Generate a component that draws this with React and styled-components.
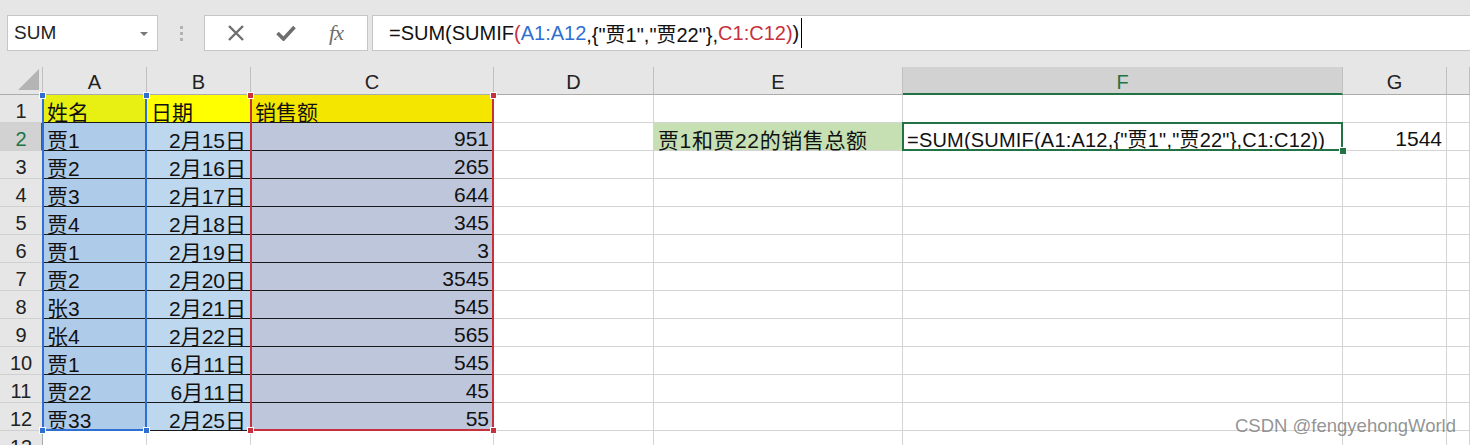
import React from "react";
import styled, { createGlobalStyle } from "styled-components";

const GlobalStyle = createGlobalStyle`
  html, body { margin: 0; padding: 0; background: #ffffff; overflow: hidden; }
  #root { width: 1470px; height: 445px; }
`;

const FONT = `"Liberation Sans", "Noto Sans CJK SC", Arial, sans-serif`;
const GREEN = "#217346";
const BLUE = "#2f6fd1";
const RED = "#c8303e";

const Page = styled.div`
  position: relative;
  width: 1470px;
  height: 445px;
  overflow: hidden;
  background: #ffffff;
  font-family: ${FONT};
`;

const Toolbar = styled.div`
  height: 67px;
  box-sizing: border-box;
  background: #e6e6e6;
  display: flex;
  align-items: flex-start;
  padding: 15px 0 0 7px;
`;

const NameBox = styled.div`
  width: 151px;
  height: 36px;
  box-sizing: border-box;
  background: #fff;
  border: 1px solid #c6c6c6;
  display: flex;
  align-items: center;
  justify-content: space-between;
  padding: 0 9px 0 6px;
  font-size: 19px;
  color: #222;
`;

const Caret = styled.span`
  width: 0;
  height: 0;
  border-left: 4px solid transparent;
  border-right: 4px solid transparent;
  border-top: 4px solid #777;
  margin-top: 2px;
`;

const Grip = styled.div`
  width: 46px;
  height: 36px;
  display: flex;
  flex-direction: column;
  align-items: center;
  justify-content: center;
  gap: 3px;
`;

const GripDot = styled.span`
  width: 3px;
  height: 3px;
  background: #b2b2b2;
`;

const ButtonBox = styled.div`
  width: 164px;
  height: 36px;
  box-sizing: border-box;
  background: #fff;
  border: 1px solid #c6c6c6;
  display: flex;
  align-items: center;
  justify-content: space-around;
  padding: 0 6px;
`;

const IconButton = styled.span`
  width: 40px;
  height: 34px;
  display: flex;
  align-items: center;
  justify-content: center;
  color: #6e6e6e;
`;

const Fx = styled.span`
  font-family: "Liberation Serif", "DejaVu Serif", serif;
  font-style: italic;
  font-size: 22px;
  color: #6e6e6e;
  letter-spacing: -1px;
`;

const FormulaInput = styled.div`
  flex: 1;
  height: 36px;
  margin-left: 4px;
  box-sizing: border-box;
  background: #fff;
  border: 1px solid #c6c6c6;
  border-right: none;
  display: flex;
  align-items: center;
  padding-left: 16px;
  font-size: 20px;
  color: #111;
  white-space: pre;
`;

const Tok = styled.span`
  color: ${(p) => p.$c || "#111"};
`;

const Cursor = styled.span`
  display: inline-block;
  width: 1px;
  height: 30px;
  background: #000;
  margin-left: 2px;
`;

const Sheet = styled.div`
  display: grid;
  grid-template-columns: 43px 104px 104px 243px 160px 249px 440px 104px 1fr;
  grid-auto-rows: 28px;
  font-size: 20px;
`;

const Corner = styled.div`
  grid-row: 1;
  grid-column: 1;
  background: #e6e6e6;
  border-right: 1px solid #c0c0c0;
  border-bottom: 1px solid #ababab;
  box-sizing: border-box;
  display: flex;
  align-items: flex-end;
  justify-content: flex-end;
  padding: 0 3px 4px 0;
`;

const ColHead = styled.div`
  grid-row: 1;
  grid-column: ${(p) => p.$col};
  box-sizing: border-box;
  background: ${(p) => (p.$active ? "#d2d2d2" : "#e6e6e6")};
  color: ${(p) => (p.$active ? GREEN : "#222")};
  border-right: 1px solid #c0c0c0;
  border-bottom: ${(p) => (p.$active ? `2px solid ${GREEN}` : "1px solid #ababab")};
  display: flex;
  align-items: center;
  justify-content: center;
  padding-top: ${(p) => (p.$active ? "5px" : "4px")};
`;

const RowHead = styled.div`
  grid-row: ${(p) => p.$row};
  grid-column: 1;
  box-sizing: border-box;
  background: ${(p) => (p.$active ? "#d2d2d2" : "#e6e6e6")};
  color: ${(p) => (p.$active ? GREEN : "#222")};
  border-right: ${(p) => (p.$active ? `2px solid ${GREEN}` : "1px solid #ababab")};
  border-bottom: 1px solid #d0d0d0;
  display: flex;
  align-items: center;
  justify-content: center;
  padding-top: 5px;
  padding-left: ${(p) => (p.$active ? "1px" : "0")};
`;

const Cell = styled.div`
  grid-row: ${(p) => p.$row};
  grid-column: ${(p) => p.$col};
  box-sizing: border-box;
  background: ${(p) => p.$bg || "#fff"};
  border-right: 1px solid #d4d4d4;
  border-bottom: 1px solid ${(p) => (p.$dark ? "#1a1a1a" : "#d4d4d4")};
  display: flex;
  align-items: center;
  justify-content: ${(p) => (p.$right ? "flex-end" : "flex-start")};
  padding: 4px ${(p) => (p.$right ? "4px" : "0")} 0 ${(p) => (p.$right ? "0" : "4px")};
  white-space: nowrap;
  overflow: visible;
  color: #111;
  font-size: ${(p) => p.$fs || "21px"};
  letter-spacing: ${(p) => p.$ls || "0"};
`;

const Range = styled.div`
  grid-row: ${(p) => p.$rows};
  grid-column: ${(p) => p.$col};
  position: relative;
  z-index: 2;
  margin-left: -1px;
  border-left: 2px solid ${(p) => p.$color};
  border-right: 2px solid ${(p) => p.$color};
  border-bottom: 2px solid ${(p) => p.$color};
  pointer-events: none;
`;

const Handle = styled.span`
  position: absolute;
  width: 5px;
  height: 5px;
  background: ${(p) => p.$color};
  outline: 1px solid #fff;
  ${(p) => (p.$top ? "top: -2px;" : "bottom: -4px;")}
  ${(p) => (p.$left ? "left: -4px;" : "right: -4px;")}
`;

const Active = styled.div`
  grid-row: 3;
  grid-column: 7;
  position: relative;
  z-index: 3;
  margin: -1px 0 0 -1px;
  border: 2px solid ${GREEN};
  pointer-events: none;
`;

const FillHandle = styled.span`
  position: absolute;
  right: -5px;
  bottom: -5px;
  width: 6px;
  height: 6px;
  background: ${GREEN};
  outline: 1px solid #fff;
`;

const Watermark = styled.div`
  position: absolute;
  left: 1235px;
  top: 415px;
  font-family: "Liberation Sans", Arial, sans-serif;
  font-size: 18.5px;
  color: rgba(120, 120, 120, 0.8);
  white-space: nowrap;
  z-index: 5;
`;

const cols = ["A", "B", "C", "D", "E", "F", "G", ""];

const data = [
  ["姓名", "日期", "销售额"],
  ["贾1", "2月15日", "951"],
  ["贾2", "2月16日", "265"],
  ["贾3", "2月17日", "644"],
  ["贾4", "2月18日", "345"],
  ["贾1", "2月19日", "3"],
  ["贾2", "2月20日", "3545"],
  ["张3", "2月21日", "545"],
  ["张4", "2月22日", "565"],
  ["贾1", "6月11日", "545"],
  ["贾22", "6月11日", "45"],
  ["贾33", "2月25日", "55"],
];

const headBg = ["#e8ef12", "#ffff00", "#f5e600"];
const bodyBg = ["#afcbea", "#bdd7ee", "#bec6dc"];

function XIcon() {
  return (
    <svg width="18" height="16" viewBox="0 0 18 16">
      <path d="M2 1 L16 15 M16 1 L2 15" stroke="#6e6e6e" strokeWidth="2.4" fill="none" />
    </svg>
  );
}

function CheckIcon() {
  return (
    <svg width="20" height="16" viewBox="0 0 20 16">
      <path d="M1.5 8 L7.5 14 L18.5 2" stroke="#6e6e6e" strokeWidth="3.6" fill="none" strokeLinejoin="miter" />
    </svg>
  );
}

export default function App() {
  const cells = [];
  const totalRows = 14;
  for (let r = 1; r <= totalRows; r++) {
    const gridRow = r + 1;
    cells.push(
      <RowHead key={`rh${r}`} $row={gridRow} $active={r === 2}>
        {r}
      </RowHead>
    );
    for (let c = 0; c < 8; c++) {
      const gridCol = c + 2;
      let text = "";
      let bg;
      let right = false;
      let dark = false;
      let fs;
      let ls;
      if (c < 3 && r <= 12) {
        text = data[r - 1][c];
        bg = r === 1 ? headBg[c] : bodyBg[c];
        right = r > 1 && c > 0;
        dark = true;
      }
      if (r === 2 && c === 4) {
        text = "贾1和贾22的销售总额";
        bg = "#c6e0b4";
        ls = "0.6px";
      }
      if (r === 2 && c === 5) {
        text = '=SUM(SUMIF(A1:A12,{"贾1","贾22"},C1:C12))';
        fs = "20px";
        ls = "0.2px";
      }
      if (r === 2 && c === 6) {
        text = "1544";
        right = true;
      }
      cells.push(
        <Cell
          key={`c${r}-${c}`}
          $row={gridRow}
          $col={gridCol}
          $bg={bg}
          $right={right}
          $dark={dark}
          $fs={fs}
          $ls={ls}
        >
          {text}
        </Cell>
      );
    }
  }

  return (
    <Page>
      <GlobalStyle />
      <Toolbar>
        <NameBox>
          SUM
          <Caret />
        </NameBox>
        <Grip>
          <GripDot />
          <GripDot />
          <GripDot />
        </Grip>
        <ButtonBox>
          <IconButton>
            <XIcon />
          </IconButton>
          <IconButton>
            <CheckIcon />
          </IconButton>
          <IconButton>
            <Fx>fx</Fx>
          </IconButton>
        </ButtonBox>
        <FormulaInput>
          <Tok>=SUM(SUMIF</Tok>
          <Tok $c={RED}>(</Tok>
          <Tok $c={BLUE}>A1:A12</Tok>
          <Tok>{',{"贾1","贾22"},'}</Tok>
          <Tok $c={RED}>C1:C12)</Tok>
          <Tok>)</Tok>
          <Cursor />
        </FormulaInput>
      </Toolbar>
      <Sheet>
        <Corner>
          <svg width="21" height="21" viewBox="0 0 21 21">
            <polygon points="0,21 21,21 21,0" fill="#b4b4b4" />
          </svg>
        </Corner>
        {cols.map((c, i) => (
          <ColHead key={`h${i}`} $col={i + 2} $active={c === "F"}>
            {c}
          </ColHead>
        ))}
        {cells}
        <Range $rows="2 / 14" $col="2" $color={BLUE}>
          <Handle $color={BLUE} $top $left />
          <Handle $color={BLUE} $top />
          <Handle $color={BLUE} $left />
          <Handle $color={BLUE} />
        </Range>
        <Range $rows="2 / 14" $col="4" $color={RED}>
          <Handle $color={RED} $top $left />
          <Handle $color={RED} $top />
          <Handle $color={RED} $left />
          <Handle $color={RED} />
        </Range>
        <Active>
          <FillHandle />
        </Active>
      </Sheet>
      <Watermark>CSDN @fengyehongWorld</Watermark>
    </Page>
  );
}
